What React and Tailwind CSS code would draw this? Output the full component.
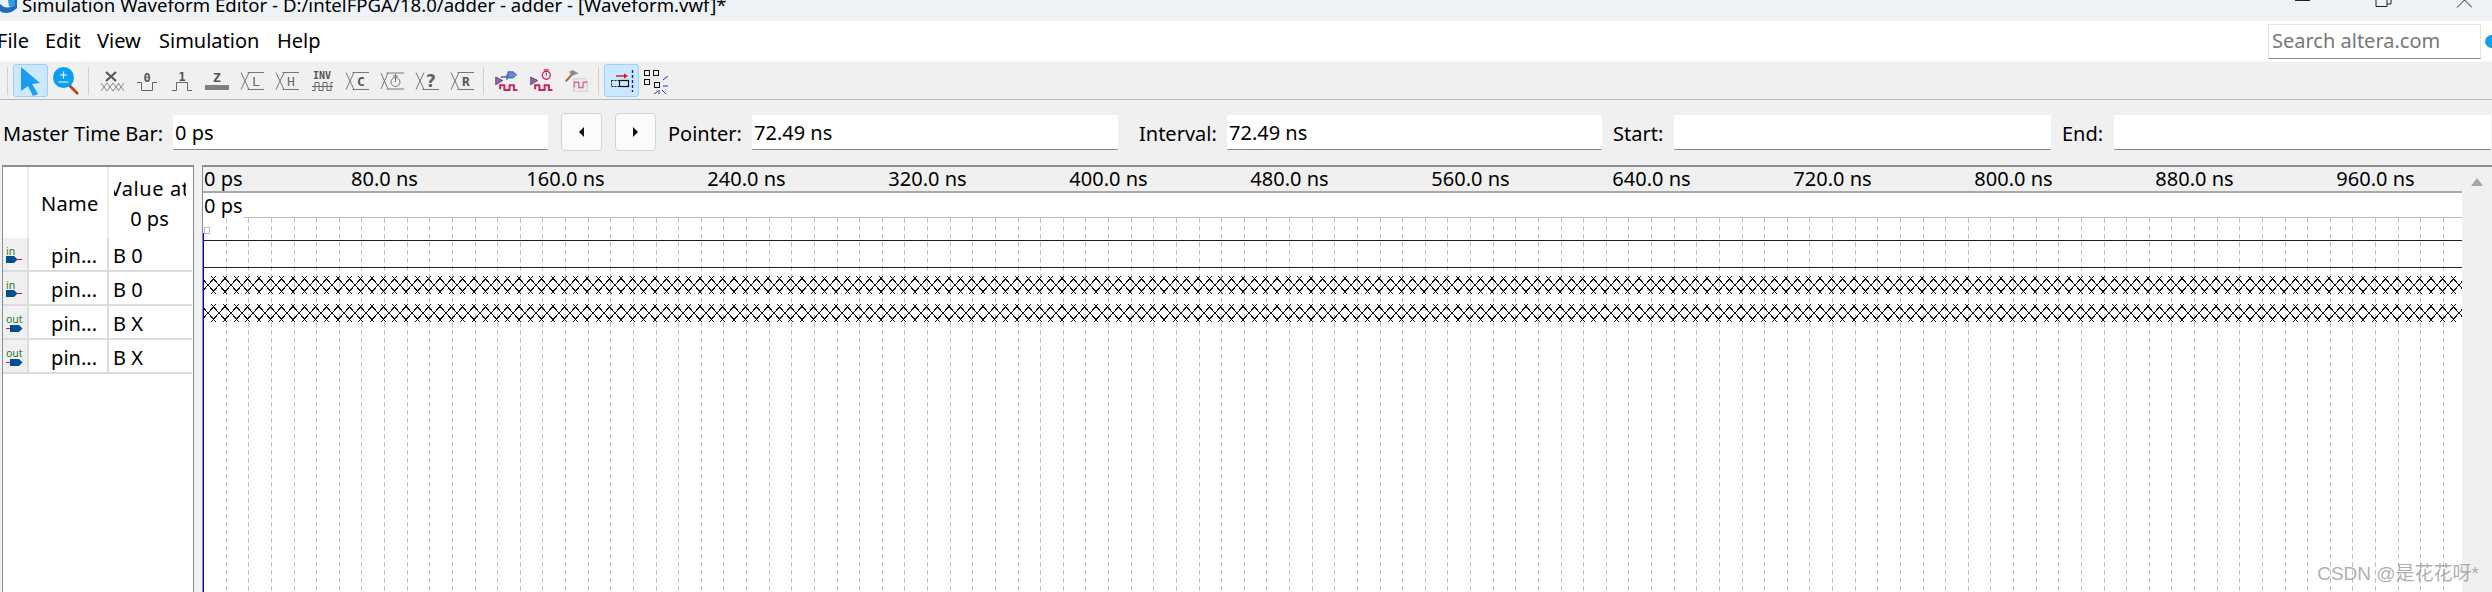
import React from 'react';

const ruler = ['80.0 ns', '160.0 ns', '240.0 ns', '320.0 ns', '400.0 ns', '480.0 ns', '560.0 ns', '640.0 ns', '720.0 ns', '800.0 ns', '880.0 ns', '960.0 ns'];

const pins = [
  { dir: 'in', value: 'B 0' },
  { dir: 'in', value: 'B 0' },
  { dir: 'out', value: 'B X' },
  { dir: 'out', value: 'B X' },
];

// Small "force value" glyph: crossing lines that open into a bus, with a letter inside
function ForceIcon({ label, bold }) {
  return (
    <svg width="24" height="24" viewBox="0 0 24 24" fill="none" stroke="#777" strokeWidth="1">
      <path d="M1 3.5 L9 20.5 M9 3.5 L1 20.5 M7.5 3.5 H24 M7.5 20.5 H24" />
      <text x="16" y="16.5" textAnchor="middle" fontSize="13" fontWeight={bold ? 700 : 400} fontFamily="'DejaVu Sans Mono', monospace" fill={bold ? '#555' : '#666'} stroke="none">{label}</text>
    </svg>
  );
}

function UnknownIcon() {
  return (
    <svg width="24" height="24" viewBox="0 0 24 24" fill="none" stroke="#777" strokeWidth="1">
      <path d="M1 3.5 L9 20.5 M9 3.5 L1 20.5 M7.5 20.5 H24" />
      <text x="16" y="18" textAnchor="middle" fontSize="17" fontWeight="700" fontFamily="'DejaVu Sans', sans-serif" fill="#666" stroke="none">?</text>
    </svg>
  );
}

function ClockIcon() {
  return (
    <svg width="24" height="24" viewBox="0 0 24 24" fill="none" stroke="#777" strokeWidth="1">
      <path d="M1 4 L8 20 M8 4 L1 20 M6.5 4 H24 M6.5 20 H24" />
      <circle cx="15.5" cy="13" r="4.5" />
      <path d="M15.5 5 V13 M13 7 H18" />
    </svg>
  );
}

function AllUnknownIcon() {
  return (
    <svg width="24" height="24" viewBox="0 0 24 24" fill="none">
      <path d="M6 3 L16 12 M16 3 L6 12" stroke="#555" strokeWidth="2.2" />
      <path d="M1 14 L7 22 M7 14 L1 22 M7 14 L13 22 M13 14 L7 22 M13 14 L19 22 M19 14 L13 22 M18 14 L24 22 M24 14 L18 22" stroke="#888" strokeWidth="1" />
    </svg>
  );
}

function LevelIcon({ label, high }) {
  return (
    <svg width="24" height="24" viewBox="0 0 24 24" fill="none" stroke="#666" strokeWidth="1">
      <path d={high ? 'M2 21.5 H6.5 V13.5 H17.5 V21.5 H22' : 'M2 13.5 H6.5 V21.5 H17.5 V13.5 H22'} />
      <text x="12" y={high ? 12 : 13} textAnchor="middle" fontSize="12" fontWeight="700" fontFamily="'DejaVu Sans Mono', monospace" fill="#555" stroke="none">{label}</text>
    </svg>
  );
}

function ZIcon() {
  return (
    <svg width="24" height="24" viewBox="0 0 24 24">
      <text x="12" y="13" textAnchor="middle" fontSize="13" fontWeight="700" fontFamily="'DejaVu Sans Mono', monospace" fill="#555">Z</text>
      <rect x="0" y="16" width="24" height="5" fill="#808080" />
    </svg>
  );
}

function InvIcon() {
  return (
    <svg width="24" height="24" viewBox="0 0 24 24" fill="none" stroke="#666" strokeWidth="1">
      <text x="12" y="10" textAnchor="middle" fontSize="10" fontWeight="700" fontFamily="'DejaVu Sans Mono', monospace" fill="#555" stroke="none">INV</text>
      <path d="M2 17.5 H5 V13.5 H9 V17.5 H13 V13.5 H17 V17.5 H21 V13.5 H23 M2 21.5 H5 V17.5 H9 V21.5 H13 V17.5 H17 V21.5 H21 V17.5 H23" />
    </svg>
  );
}

function WaveBase() {
  return (
    <>
      <path d="M2 9 L10 13 L2 18 Z" fill="#9a5fb4" stroke="#4a4a6a" strokeWidth="1" />
      <path d="M7 23 V18.5 H12 V24 H18 V18.5 H23 V24 H27" fill="none" stroke="#c8245f" strokeWidth="2.2" />
    </>
  );
}

function PlugIcon() {
  return (
    <svg width="26" height="23" viewBox="0 0 30 26">
      <WaveBase />
      <path d="M8 9 H15 M15 6 V12" stroke="#3f63b5" strokeWidth="1.6" fill="none" />
      <path d="M16 3 H22 L26 6.5 L22 10 H16 Z" fill="#5f8fdc" stroke="#2f4f9f" strokeWidth="1" />
    </svg>
  );
}

function TimerIcon() {
  return (
    <svg width="26" height="23" viewBox="0 0 30 26">
      <WaveBase />
      <circle cx="20" cy="7" r="4.6" fill="#fbe8ee" stroke="#c8245f" strokeWidth="1.6" />
      <path d="M20 4 V7.5" stroke="#444" strokeWidth="1.2" />
      <path d="M17 0.8 H23" stroke="#c8245f" strokeWidth="1.4" />
    </svg>
  );
}

function HammerIcon() {
  return (
    <svg width="26" height="23" viewBox="0 0 30 26">
      <path d="M11 11 H24 L27 14 V26 H11 Z" fill="#e9e9f2" stroke="#c9c9d6" strokeWidth="1" />
      <path d="M12 21 V15 H17 V21 H22 V15 H27" fill="none" stroke="#dd6f7f" strokeWidth="1.6" />
      <path d="M2 14 L10 5" stroke="#a5673f" strokeWidth="2.4" />
      <path d="M6 3 L10 1 L17 5 L13 6 L9 8 Z" fill="#8d8d8d" />
    </svg>
  );
}

function SnapIcon() {
  return (
    <svg width="24" height="26" viewBox="0 0 24 26" fill="none">
      <path d="M6 8 H16" stroke="#e01010" strokeWidth="1.4" />
      <path d="M14 5.5 L18 8 L14 10.5 Z" fill="#e01010" />
      <path d="M1.5 12.5 H9 M1.5 18.5 H9 M1.5 12.5 V18.5" stroke="#222" strokeWidth="1" strokeDasharray="2 1" />
      <rect x="9.5" y="12.5" width="9" height="6" stroke="#111" strokeWidth="1.2" />
      <path d="M22.5 2 V24" stroke="#1020d0" strokeWidth="1.4" strokeDasharray="3 2" />
    </svg>
  );
}

function GridSnapIcon() {
  return (
    <svg width="26" height="26" viewBox="0 0 26 26" fill="none" shapeRendering="crispEdges">
      <rect x="1.5" y="2.5" width="5" height="5" stroke="#111" strokeWidth="1.4" />
      <rect x="10.5" y="2.5" width="5" height="5" stroke="#111" strokeWidth="1.4" />
      <rect x="1.5" y="11.5" width="5" height="5" stroke="#111" strokeWidth="1.4" />
      <rect x="11.5" y="14.5" width="5" height="5" stroke="#111" strokeWidth="1.4" />
      <path d="M20 12 L25 8 M20 18 H25 M15 23 L11 26 M19 22 L23 26 M16 22 V26" stroke="#1030e0" strokeWidth="1" shapeRendering="auto" />
    </svg>
  );
}

function ArrowIcon() {
  return (
    <svg width="26" height="30" viewBox="0 0 26 30">
      <path d="M3 1 L22 17 L14 18 L20 28 L15 30 L10 20 L3 25 Z" fill="#1a9cf0" />
    </svg>
  );
}

function ZoomIcon() {
  return (
    <svg width="26" height="28" viewBox="0 0 26 28">
      <path d="M16 18 L25 27" stroke="#b8421a" strokeWidth="2.6" />
      <circle cx="10.5" cy="10.5" r="10.5" fill="#0aa0f2" />
      <path d="M7 8 H14 M10.5 4.5 V11.5 M5.5 15 H15.5" stroke="#fff" strokeWidth="1.2" fill="none" />
    </svg>
  );
}

function ToolSep() {
  return <div className="w-px h-[28px] bg-[#cfcfcf]" />;
}

function Tool({ children }) {
  return <div className="w-[35px] h-[37px] flex items-center justify-center shrink-0">{children}</div>;
}

function PinIcon({ dir }) {
  return (
    <svg width="24" height="32" viewBox="0 0 24 32" className="block">
      <text x="3" y="17" fontSize="10.5" fontFamily="'Noto Sans', sans-serif" fill="#1c7a2c">{dir}</text>
      {dir === 'in' ? (
        <>
          <path d="M13 21.5 H19" stroke="#d02020" strokeWidth="1" />
          <path d="M3 18 H11 L14.5 21.5 L11 25 H3 Z" fill="#004f8f" />
        </>
      ) : (
        <>
          <path d="M3 22.5 H8" stroke="#d02020" strokeWidth="1" />
          <path d="M7 19 H16 L19.5 22.5 L16 26 H7 Z" fill="#004f8f" />
        </>
      )}
    </svg>
  );
}

function TimeField({ value, w }) {
  return (
    <div className={`${w} h-[35px] shrink-0 bg-white border-b border-[#8a8a8a] rounded-[1px] pl-[2px] pt-[3px] flex items-center whitespace-nowrap`}>{value}</div>
  );
}

function StepButton({ left }) {
  return (
    <div className="w-[41px] h-[38px] shrink-0 rounded-[4px] border border-[#d2d2d2] bg-[#fbfbfb] flex items-center justify-center">
      <svg width="5" height="10" viewBox="0 0 5 10">
        <path d={left ? 'M5 0 V10 L0 5 Z' : 'M0 0 V10 L5 5 Z'} fill="#111" />
      </svg>
    </div>
  );
}

// Simulation traces, grid and cursor. Coordinates are relative to the wave area.
function WaveChart() {
  const W = 2259;
  const H = 374;
  const step = 22.625;
  const grid = [];
  for (let k = 1; k * step < W; k++) grid.push(Math.round(k * step));
  // One X every half grid step, wide enough for neighbours to overlap
  const cross = (top) => {
    let d = '';
    for (let k = 0; k * (step / 2) < W + 10; k++) {
      const c = Math.round(k * (step / 2)) + 5;
      d += `M${c - 8} ${top} L${c + 8} ${top + 18} M${c + 8} ${top} L${c - 8} ${top + 18} `;
    }
    return d;
  };
  return (
    <svg width={W} height={H} viewBox={`0 0 ${W} ${H}`} className="block">
      <g shapeRendering="crispEdges">
        {grid.map((x) => (
          <line key={x} x1={x + 0.5} y1="0" x2={x + 0.5} y2={H} stroke="#c0c0c0" strokeWidth="1" strokeDasharray="5 3" />
        ))}
        <line x1="0" y1="22.5" x2={W} y2="22.5" stroke="#222" strokeWidth="1" />
        <line x1="0" y1="49.5" x2={W} y2="49.5" stroke="#222" strokeWidth="1" />
        <path d={cross(58)} stroke="#111" strokeWidth="1" fill="none" />
        <path d={cross(86)} stroke="#111" strokeWidth="1" fill="none" />
      </g>
      <rect x="1.5" y="9.5" width="5" height="6" fill="#fff" stroke="#bbb" />
      <rect x="0" y="15" width="1" height={H - 15} fill="#0000d0" />
    </svg>
  );
}

export default function App() {
  return (
    <div className="relative w-[2492px] h-[592px] overflow-hidden bg-[#f0f0f0] text-black text-[20px] font-['Noto_Sans',sans-serif] flex flex-col">
      {/* Title bar, cut off at the top of the capture */}
      <div className="h-[21px] shrink-0 bg-[#eef3f8] flex items-start overflow-hidden">
        <svg width="22" height="14" viewBox="0 0 22 14" className="shrink-0">
          <path d="M0 4 Q6 10 12 6 L12 0 H17 V8 Q12 13 6 13 Q2 13 0 11 Z" fill="#1a6fb8" />
          <path d="M8 0 H15 V6 Q12 8 9 6 Z" fill="#2f9be4" />
        </svg>
        <div className="mt-[-7px] whitespace-nowrap leading-[24px] text-[18.6px]">Simulation Waveform Editor - D:/intelFPGA/18.0/adder - adder - [Waveform.vwf]*</div>
        <svg width="177" height="9" viewBox="0 0 177 9" className="ml-auto mr-[20px] shrink-0" fill="none" stroke="#222" strokeWidth="1">
          <path d="M0 0.5 H15" />
          <path d="M81 0 V6.5 H92 V0 M92 4 H96 V0" />
          <path d="M162 7.5 L169.5 0 L177 7.5" />
        </svg>
      </div>

      {/* Menu bar */}
      <div className="h-[40px] shrink-0 bg-white flex items-center">
        <span className="ml-[-3px] w-[48px]">File</span>
        <span className="w-[52px]">Edit</span>
        <span className="w-[62px]">View</span>
        <span className="w-[118px]">Simulation</span>
        <span>Help</span>
        <div className="ml-auto w-[213px] h-[35px] bg-white border border-[#e4e4e4] border-b-[#8a8a8a] pl-[3px] flex items-center text-[#777] whitespace-nowrap">Search altera.com</div>
        <div className="ml-[4px] mr-[-6px] w-[13px] h-[13px] rounded-full bg-[#12a0ee] shrink-0" />
      </div>

      {/* Toolbar */}
      <div className="h-[39px] shrink-0 border-t border-[#f8f8f8] border-b border-b-[#b8b8b8] bg-[#f0f0f0] flex items-center pl-[7px]">
        <ToolSep />
        <div className="ml-[5px] w-[35px] h-[33px] rounded-[3px] bg-[#cce8ff] border border-[#99d1ff] flex items-center justify-center shrink-0"><ArrowIcon /></div>
        <div className="ml-[5px] w-[26px] flex items-center justify-center shrink-0"><ZoomIcon /></div>
        <div className="ml-[9px]"><ToolSep /></div>
        <div className="ml-[5px] flex">
          <Tool><AllUnknownIcon /></Tool>
          <Tool><LevelIcon label="0" /></Tool>
          <Tool><LevelIcon label="1" high /></Tool>
          <Tool><ZIcon /></Tool>
          <Tool><ForceIcon label="L" /></Tool>
          <Tool><ForceIcon label="H" /></Tool>
          <Tool><InvIcon /></Tool>
          <Tool><ForceIcon label="C" bold /></Tool>
          <Tool><ClockIcon /></Tool>
          <Tool><UnknownIcon /></Tool>
          <Tool><ForceIcon label="R" bold /></Tool>
        </div>
        <div className="ml-[4px]"><ToolSep /></div>
        <div className="ml-[5px] flex">
          <Tool><PlugIcon /></Tool>
          <Tool><TimerIcon /></Tool>
          <Tool><HammerIcon /></Tool>
        </div>
        <div className="ml-[4px]"><ToolSep /></div>
        <div className="ml-[5px] w-[35px] h-[33px] rounded-[3px] bg-[#cce8ff] border border-[#99d1ff] flex items-center justify-center shrink-0"><SnapIcon /></div>
        <div className="ml-[4px] flex items-center shrink-0"><GridSnapIcon /></div>
      </div>

      {/* Time bar */}
      <div className="h-[65px] shrink-0 flex items-center pl-[3px] pb-[1px] whitespace-nowrap">
        <span className="w-[170px] shrink-0 pt-[3px]">Master Time Bar:</span>
        <TimeField w="w-[375px]" value="0 ps" />
        <div className="ml-[13px]"><StepButton left /></div>
        <div className="ml-[13px]"><StepButton /></div>
        <span className="ml-[12px] w-[84px] shrink-0 pt-[3px]">Pointer:</span>
        <TimeField w="w-[366px]" value="72.49 ns" />
        <span className="ml-[21px] w-[88px] shrink-0 pt-[3px]">Interval:</span>
        <TimeField w="w-[375px]" value="72.49 ns" />
        <span className="ml-[11px] w-[61px] shrink-0 pt-[3px]">Start:</span>
        <TimeField w="w-[377px]" />
        <span className="ml-[11px] w-[52px] shrink-0 pt-[3px]">End:</span>
        <TimeField w="w-[377px]" />
      </div>

      {/* Node list and waveform */}
      <div className="flex-1 min-h-0 flex pl-[2px]">
        <div className="w-[192px] shrink-0 bg-white border-[#8b8e94] border-t-2 border-l border-r overflow-hidden">
          <div className="grid grid-cols-[24px_80px_85px] grid-rows-[71px] auto-rows-[34px]">
            <div />
            <div className="border-l-2 border-[#ececec] pl-[12px] pt-[2px] flex items-center tracking-[0.3px]">Name</div>
            <div className="border-l-2 border-[#ececec] flex flex-col items-center justify-center leading-[30px] pr-[2px] pt-[2px]">
              <div className="w-[72px] overflow-hidden flex justify-center"><span className="whitespace-nowrap shrink-0 tracking-[0.6px]">Value at</span></div>
              <span>0 ps</span>
            </div>
            {pins.map((pin, i) => (
              <React.Fragment key={i}>
                <div className="bg-[#f0f0f0] border-b-2 border-[#dcdcdc]"><PinIcon dir={pin.dir} /></div>
                <div className="border-l-2 border-b-2 border-[#dcdcdc] pr-[10px] pt-[3px] flex items-center justify-end">pin...</div>
                <div className="border-l-2 border-b-2 border-[#dcdcdc] pl-[4px] pt-[3px] flex items-center">{pin.value}</div>
              </React.Fragment>
            ))}
          </div>
        </div>

        <div className="ml-[8px] flex-1 min-w-0 flex bg-white border-t-2 border-l border-[#8b8e94] overflow-hidden">
          <div className="w-[2259px] shrink-0 flex flex-col">
            <div className="h-[26px] shrink-0 bg-[#f0f0f0] border-b-2 border-[#a9a9a9] flex items-center whitespace-nowrap">
              <span className="w-[91px] shrink-0 pl-[1px]">0 ps</span>
              {ruler.map((t) => (
                <span key={t} className="w-[181px] shrink-0 text-center">{t}</span>
              ))}
            </div>
            <div className="h-[25px] shrink-0 flex">
              <span className="w-[41px] shrink-0 pl-[1px] leading-[26px]">0 ps</span>
              <div className="flex-1 border-b border-[#bdbdbd]" />
            </div>
            <WaveChart />
          </div>
          <div className="flex-1 bg-[#f0f0f0] flex justify-center pt-[11px]">
            <svg width="12" height="8" viewBox="0 0 12 8"><path d="M6 0 L12 8 H0 Z" fill="#a6a6a6" /></svg>
          </div>
        </div>
      </div>

      {/* Image host watermark */}
      <div className="absolute right-[13px] bottom-[4px] text-[19px] leading-[28px] text-[#8c8c8c]/70 font-['Liberation_Sans','Noto_Sans_CJK_SC',sans-serif] whitespace-nowrap">CSDN @是花花呀*</div>
    </div>
  );
}
